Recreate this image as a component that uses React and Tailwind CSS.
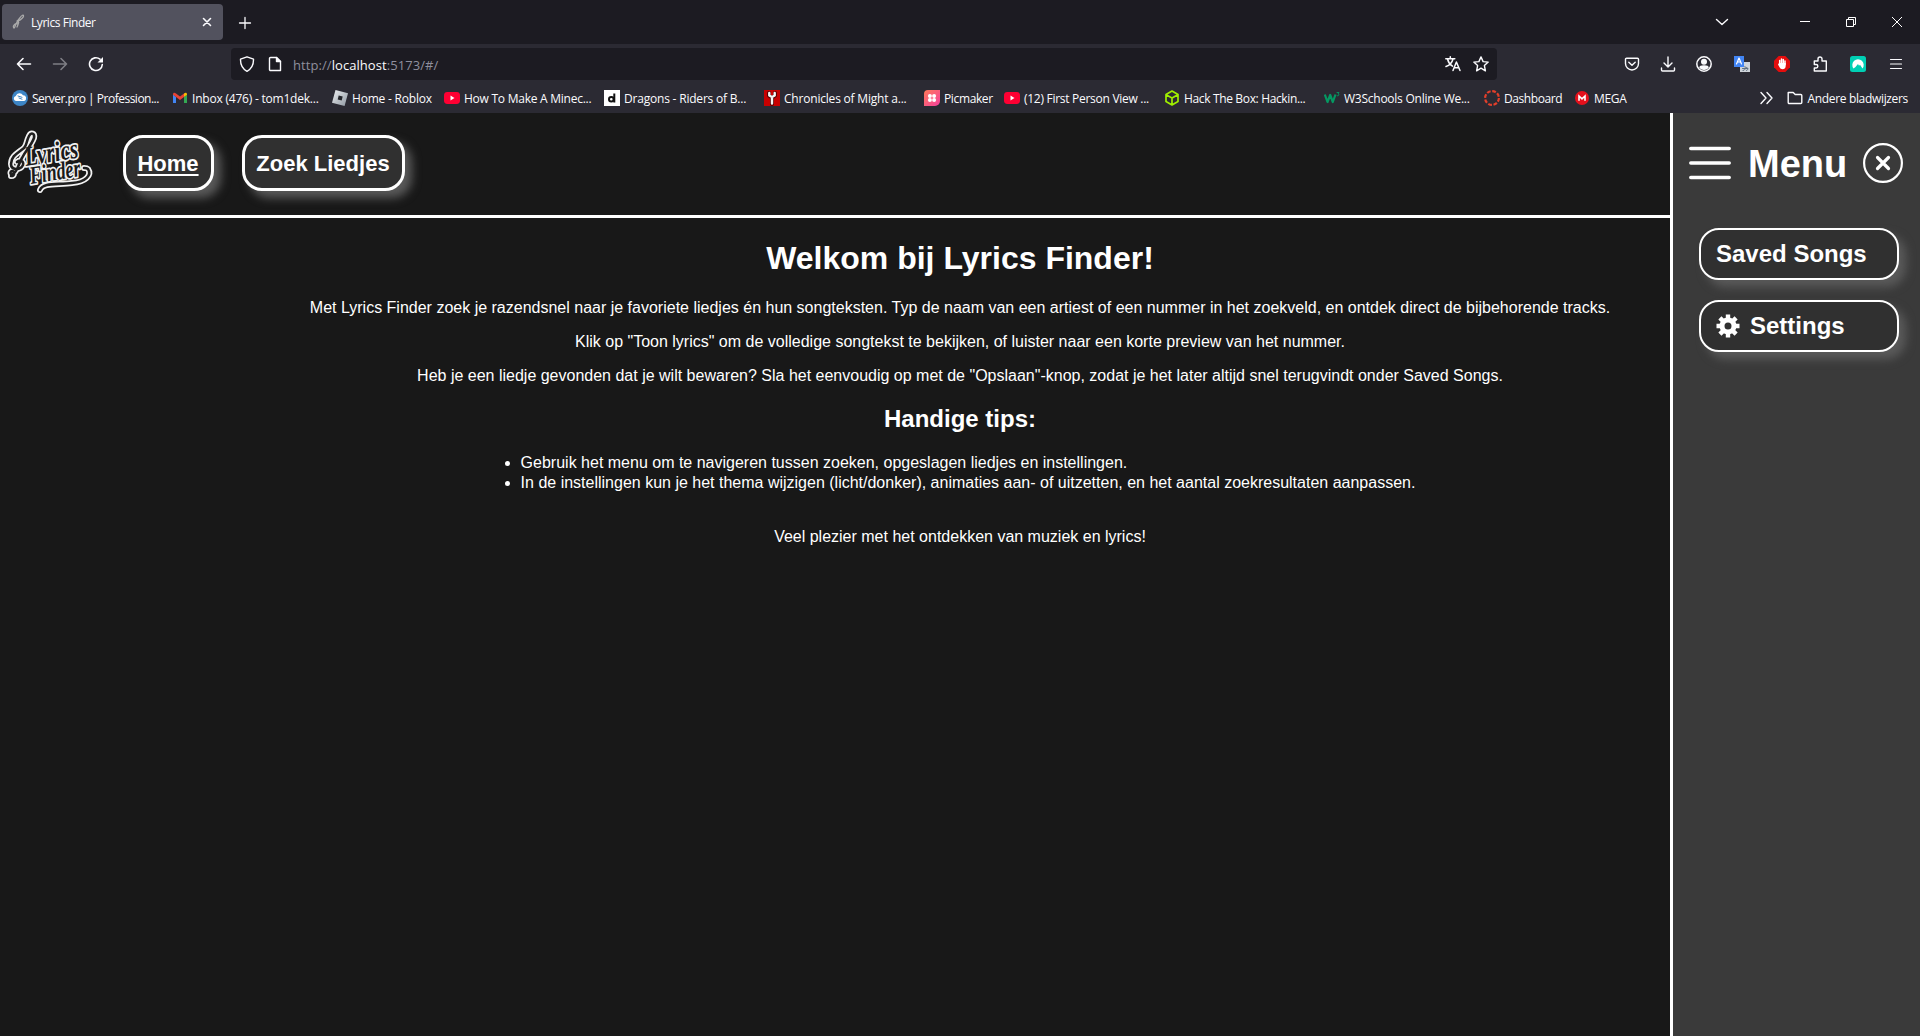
import React from "react";

const stroke = { fill: "none", stroke: "#fbfbfe", strokeWidth: 1.4, strokeLinecap: "round", strokeLinejoin: "round" };

function Ic({ children, className = "" }) {
  return (
    <svg width="16" height="16" viewBox="0 0 16 16" className={"shrink-0 " + className} {...stroke}>
      {children}
    </svg>
  );
}

const YouTube = () => (
  <Ic>
    <rect x="0" y="2" width="16" height="12" rx="3.4" fill="#ff0033" stroke="none" />
    <path d="M6.5 5.6v4.8L10.500 8z" fill="#fff" stroke="none" />
  </Ic>
);

const bookmarks = [
  { label: "Server.pro | Profession...", w: "w-[160px]", t: "tracking-[-0.5px]", icon: (
    <Ic><circle cx="8" cy="8" r="8" fill="#3d85c6" stroke="none" /><path d="M4 11a2.600 2.600 0 0 1-.2-5.100A4 4 0 0 1 11 5.200a3 3 0 0 1 1.200 5.800z" fill="#fff" stroke="none" /><path d="M6 6l4 1.300M7 8l3 1.200" stroke="#3d85c6" strokeWidth="1" /></Ic>) },
  { label: "Inbox (476) - tom1dek...", w: "w-[160px]", t: "tracking-[-0.21px]", icon: (
    <Ic><g stroke="none"><path d="M1 4.500v8.500h3V7z" fill="#4285f4" /><path d="M15 4.500v8.500h-3V7z" fill="#34a853" /><path d="M12 7l3-2.300c0-2-1.500-2.300-3-1.200z" fill="#fbbc04" /><path d="M1 4.500C1 2.500 2.600 2.300 4 3.500l4 3 4-3V7l-4 3-4-3-3-2.200z" fill="#ea4335" /></g></Ic>) },
  { label: "Home - Roblox", w: "w-[112px]", t: "tracking-[-0.2px]", icon: (
    <Ic><defs><linearGradient id="rb" x2="1" y2="1"><stop stopColor="#eef0f2" /><stop offset="1" stopColor="#8d96a0" /></linearGradient></defs><path d="M3.500 0 16 3.200 12.600 16 0 12.700z" fill="url(#rb)" stroke="none" /><path d="M6.700 5.500l4 1-1 4-4-1z" fill="#24262b" stroke="none" /></Ic>) },
  { label: "How To Make A Minec...", w: "w-[160px]", t: "tracking-[-0.25px]", icon: <YouTube /> },
  { label: "Dragons - Riders of B...", w: "w-[160px]", t: "tracking-[-0.2px]", icon: (
    <Ic><rect width="16" height="16" fill="#fff" stroke="none" /><circle cx="7.300" cy="9.300" r="2.300" stroke="#111" strokeWidth="2" /><path d="M10.300 3.500v9" stroke="#111" strokeWidth="2" strokeLinecap="butt" /></Ic>) },
  { label: "Chronicles of Might a...", w: "w-[160px]", t: "tracking-[-0.2px]", icon: (
    <Ic><rect width="16" height="16" fill="#c80000" stroke="none" /><path d="M5 3v2.500L8 7.500l3-2V3M8 8v6" stroke="#500" strokeWidth="4" /><path d="M5.300 3v2.500L8 7l2.700-1.500V3M8 8v5.500" stroke="#f4f4f4" strokeWidth="2.400" /></Ic>) },
  { label: "Picmaker", w: "w-[80px]", t: "tracking-[-0.37px]", icon: (
    <Ic><defs><linearGradient id="pm" x2="1" y2="1"><stop stopColor="#ff7a59" /><stop offset="1" stopColor="#f43f9d" /></linearGradient></defs><path d="M4 0h12v11a5 5 0 0 1-5 5H0V4a4 4 0 0 1 4-4z" fill="url(#pm)" stroke="none" /><g fill="#fff" stroke="none"><circle cx="5.900" cy="5.900" r="2" /><circle cx="10.100" cy="5.900" r="2" /><circle cx="5.900" cy="10.100" r="2" /><circle cx="10.100" cy="10.100" r="2" /></g></Ic>) },
  { label: "(12) First Person View ...", w: "w-[160px]", t: "tracking-[-0.28px]", icon: <YouTube /> },
  { label: "Hack The Box: Hackin...", w: "w-[160px]", t: "tracking-[-0.35px]", icon: (
    <Ic><path d="M8 1l6 3.500v7L8 15l-6-3.500v-7zM2.500 5 8 8l5.500-3M8 8v6.500" stroke="#9fef00" strokeWidth="1.700" /></Ic>) },
  { label: "W3Schools Online We...", w: "w-[160px]", t: "tracking-[-0.25px]", icon: (
    <Ic><path d="M.8 4.500 3.500 12 6.200 5l2.600 7L11.500 4.500" stroke="#059862" strokeWidth="2.200" strokeLinecap="butt" /><path d="M13 2.500h2L14 4c1.500 0 1.300 2.300-.8 1.800" stroke="#059862" strokeWidth=".9" /></Ic>) },
  { label: "Dashboard", w: "w-[90px]", t: "tracking-[-0.42px]", icon: (
    <Ic><circle cx="8" cy="8" r="6.900" stroke="#e13f2b" strokeWidth="2.200" strokeLinecap="butt" strokeDasharray="3.820 1.600" /></Ic>) },
  { label: "MEGA", w: "w-[60px]", t: "tracking-[-0.3px]", icon: (
    <Ic><circle cx="8" cy="8" r="7" fill="#e5101c" stroke="none" /><path d="M5 10.700V6l3 2.800L11 6v4.700" stroke="#fff" strokeWidth="1.600" strokeLinecap="butt" strokeLinejoin="miter" /></Ic>) },
];

const clef = "M13 50c-2 2-4-2-1-3 3 0 3 5-1 5M14 49c4-3 4-8 8-15 4-8 9-12 12-20 1-5-3-6-5-2-3 6-2 9-5 12-6 5-13 8-13 16 0 6 9 7 12 1 1-4-3-6-6-3";
const swash = "M40 66c3-8 18-5 32-7 14-1 20-8 16-14-1-1-3-1-4-1";

function Logo() {
  return (
    <svg width="100" height="96" viewBox="0 -11 100 96" className="shrink-0 overflow-visible">
      <g fill="none" stroke="#f2f2f2" strokeWidth="6" strokeLinecap="round" strokeLinejoin="round">
        <path d={clef} />
        <path d={swash} />
      </g>
      <g fontFamily="'Liberation Serif', serif" fontWeight="700" fontStyle="italic" fill="#1a1a1a" stroke="#f2f2f2" strokeWidth="3.600" strokeLinejoin="round" paintOrder="stroke">
        <text transform="translate(26 42) rotate(-9)" fontSize="28" textLength="54" lengthAdjust="spacingAndGlyphs">Lyrics</text>
        <text transform="translate(31 60) rotate(-9)" fontSize="25" textLength="51" lengthAdjust="spacingAndGlyphs">Finder</text>
      </g>
      <g fill="none" stroke="#1f1f1f" strokeWidth="2.600" strokeLinecap="round" strokeLinejoin="round">
        <path d={clef} />
        <path d={swash} />
      </g>
    </svg>
  );
}

function Gear() {
  return (
    <svg width="24" height="24" viewBox="0 0 24 24" className="shrink-0 mr-[10px]" fill="none" stroke="#fff">
      <circle cx="12" cy="12" r="6" strokeWidth="5" />
      <path d="M12 .5v5M12 18.500v5M.5 12h5M18.500 12h5M3.900 3.900l3.500 3.500M16.600 16.600l3.500 3.500M3.900 20.100l3.500-3.500M16.600 7.400l3.500-3.500" strokeWidth="4.400" />
    </svg>
  );
}

function Browser() {
  return (
    <div className="h-[113px] bg-[#2b2a33] text-[#fbfbfe] font-['Open_Sans',sans-serif] text-[12px] whitespace-nowrap">
      <div className="h-11 bg-[#1c1b22] flex items-center pl-[2px]">
        <div className="w-[221px] h-9 rounded bg-[#52525e] flex items-center pl-[9px] pr-[10px] text-[12px] tracking-[-0.45px]">
          <Ic className="mr-[4px]"><path d="M3 14c-2-2 1-5 4-4 2-3-1-3-2 0-1 2-1 3-2 4zM6 7c2-1 3-5 6-6 2 1-2 5-5 6 1 1 0 4-1 6" stroke="#aaa" strokeWidth="1.300" /></Ic>
          <span className="grow pt-[2px]">Lyrics Finder</span>
          <Ic className="-mr-[2px]"><path d="M4.500 4.500l7 7M11.500 4.500l-7 7" strokeWidth="1.600" /></Ic>
        </div>
        <Ic className="ml-[14px] mt-[2px]"><path d="M8 2.500v11M2.500 8h11" strokeWidth="1.300" /></Ic>
        <div className="ml-auto flex items-center">
          <Ic className="mr-[70px]"><path d="M2.500 5.500 8 10.500l5.500-5" /></Ic>
          <svg width="10" height="10" viewBox="0 0 10 10" className="mr-9" stroke="#fff" fill="none"><path d="M0 4.500h10" /></svg>
          <svg width="10" height="10" viewBox="0 0 10 10" className="mr-9" stroke="#fff" fill="none"><path d="M.5 2.500h7v7h-7zM2.500 2.500v-2h7v7h-2" /></svg>
          <svg width="10" height="10" viewBox="0 0 10 10" className="mr-[18px]" stroke="#fff" fill="none"><path d="M0 0l10 10M10 0 0 10" /></svg>
        </div>
      </div>
      <div className="h-10 flex items-center pl-4">
        <Ic><path d="M1.500 8h13M7 2.500 1.500 8 7 13.500" strokeWidth="1.600" /></Ic>
        <Ic className="ml-5 opacity-40"><path d="M1.500 8h13M9 2.500 14.500 8 9 13.500" strokeWidth="1.600" /></Ic>
        <Ic className="ml-5"><path d="M14.300 8.500A6.400 6.400 0 1 1 12 3.200" strokeWidth="1.600" /><path d="M15 1v5.500H9.500z" fill="#fbfbfe" stroke="none" /></Ic>
        <div className="ml-[127px] w-[1266px] h-8 rounded bg-[#1c1b22] flex items-center px-2">
          <Ic><path d="M8 .8 14.500 3.200C14.700 9.500 12.500 13 8 15.300 3.500 13 1.300 9.500 1.500 3.200z" /></Ic>
          <Ic className="ml-3"><path d="M3.500 1.500h6l4 4v9h-10a1 1 0 0 1-1-1v-11a1 1 0 0 1 1-1z" /><path d="M9.500 1.500v4h4z" fill="#fbfbfe" /></Ic>
          <span className="ml-[10px] pt-[3px] grow text-[13px] tracking-[0.07px] text-[#8f8f9d]">http://<span className="text-[#fbfbfe]">localhost</span>:5173/#/</span>
          <Ic className="mr-3"><path d="M.8 2.800h9M5.300.800v2M2.500 3c1 4 3 6 5 7.200M8 3C7 7 4 9.500 1 10.500M8 14.500l3.400-8.500 3.600 8.500M9.300 11.800h4.500" strokeWidth="1.500" /></Ic>
          <Ic><path d="M8 .9l2.100 4.700 5.100.5-3.800 3.500 1 5.200L8 12.200l-4.400 2.600 1-5.200L.8 6.100l5.100-.5z" /></Ic>
        </div>
        <div className="ml-auto mr-4 flex items-center">
          <Ic className="mr-[20px]"><path d="M2.500 2.200h11a1 1 0 0 1 1 1V7.500a6.500 6.500 0 0 1-13 0V3.200a1 1 0 0 1 1-1zM4.800 6.200 8 9.300l3.200-3.100" /></Ic>
          <Ic className="mr-[20px]"><path d="M8 1v9.500M4 7l4 4 4-4M1.500 12v2a1 1 0 0 0 1 1h11a1 1 0 0 0 1-1v-2" /></Ic>
          <Ic className="mr-[22px]"><circle cx="8" cy="8" r="7.200" strokeWidth="1.500" /><circle cx="8" cy="5.800" r="2.300" fill="#fbfbfe" /><path d="M4 11.500c0-2 8-2 8 0-2 2.300-6 2.300-8 0z" fill="#fbfbfe" /></Ic>
          <Ic className="mr-[24px]"><rect width="10" height="11" fill="#4285f4" stroke="none" /><rect x="6" y="6" width="10" height="10" fill="#cfd4da" stroke="none" /><path d="M0 0h10v11H0z" fill="#4285f4" stroke="none" /><path d="M2.500 8 5 2l2.500 6M3.500 6h3" stroke="#fff" strokeWidth="1.200" /><path d="M8.500 12.500h5M11 10.500c1 2 0 4-2 4M12.500 11.500c2 0 2 2.500 0 3" stroke="#607080" strokeWidth="1" /></Ic>
          <Ic className="mr-[22px]"><path d="M4.700 0h6.600L16 4.700v6.600L11.300 16H4.700L0 11.300V4.700z" fill="#e40d0d" stroke="none" /><path d="M5.700 8V4.500M7.500 7V3M9.300 7V3.500M11 8.500V5" stroke="#fff" strokeWidth="1.500" /><path d="M5 7h6.700v3c0 4-5 4-6 1.500L4 8.500z" fill="#fff" stroke="none" /></Ic>
          <Ic className="mr-[22px]"><path d="M2.300 15h12V5H10V3a2 2 0 0 0-4 0v2H2.300v3.500h1.800a1.700 1.700 0 0 1 0 3.500H2.300z" /></Ic>
          <Ic className="mr-[22px]"><rect width="16" height="16" rx="2.500" fill="#00cfb4" stroke="none" /><path d="M3.500 12.500a5.700 5.700 0 1 1 9 0L10 8.800l-1 1L8 8 5.500 11z" fill="#fff" stroke="none" /></Ic>
          <Ic><path d="M2.500 3.500h11M2.500 8h11M2.500 12.500h11" strokeWidth="1.200" /></Ic>
        </div>
      </div>
      <div className="h-7 flex items-center pl-3">
        {bookmarks.map((b) => (
          <div key={b.label} className={"flex items-center gap-1 shrink-0 " + b.w}>
            {b.icon}
            <span className={"pt-[2px] " + b.t}>{b.label}</span>
          </div>
        ))}
        <div className="ml-auto mr-3 flex items-center">
          <Ic className="mr-[13px]"><path d="M3 2.500 8 8l-5 5.500M9 2.500 14 8l-5 5.500" /></Ic>
          <Ic className="mr-1"><path d="M1.200 2.500h5l2 2h5.600a1 1 0 0 1 1 1v7a1 1 0 0 1-1 1H2.200a1 1 0 0 1-1-1z" /></Ic>
          <span className="pt-[2px] tracking-[-0.33px]">Andere bladwijzers</span>
        </div>
      </div>
    </div>
  );
}

function NavButton({ children, className = "" }) {
  return (
    <button className={"h-14 pl-[11px] pr-3 rounded-[20px] border-[3px] border-white bg-[#303030] text-[22px] font-bold whitespace-nowrap shadow-[7px_7px_10px_#5a5a5a] " + className}>
      {children}
    </button>
  );
}

const sideLink = "w-[200px] h-[52px] rounded-[20px] border-2 border-white bg-[#303030] shadow-[7px_7px_10px_#5a5a5a] flex items-center pl-[15px]";

export default function App() {
  return (
    <div className="w-[1920px] h-[1036px] overflow-hidden bg-[#181818]">
      <Browser />
      <div className="grid h-[923px] font-['Liberation_Sans',Arial,sans-serif] text-white">
        <div className="col-start-1 row-start-1">
          <header className="h-[105px] border-b-[3px] border-white flex items-start">
            <Logo />
            <NavButton className="w-[91px] mt-[22px] ml-[23px] underline underline-offset-[3px]">Home</NavButton>
            <NavButton className="w-[163px] mt-[22px] ml-7">Zoek Liedjes</NavButton>
          </header>
          <main className="pt-[22px] flex flex-col items-center text-[16px] leading-[18px]">
            <h1 className="text-[32px] leading-[37px] font-bold">Welkom bij Lyrics Finder!</h1>
            <p className="mt-[22px]">Met Lyrics Finder zoek je razendsnel naar je favoriete liedjes én hun songteksten. Typ de naam van een artiest of een nummer in het zoekveld, en ontdek direct de bijbehorende tracks.</p>
            <p className="mt-4">Klik op "Toon lyrics" om de volledige songtekst te bekijken, of luister naar een korte preview van het nummer.</p>
            <p className="mt-4">Heb je een liedje gevonden dat je wilt bewaren? Sla het eenvoudig op met de "Opslaan"-knop, zodat je het later altijd snel terugvindt onder Saved Songs.</p>
            <h2 className="mt-5 text-[24px] leading-[27px] font-bold">Handige tips:</h2>
            <ul className="mt-[21px] ml-4 list-disc leading-5">
              <li>Gebruik het menu om te navigeren tussen zoeken, opgeslagen liedjes en instellingen.</li>
              <li>In de instellingen kun je het thema wijzigen (licht/donker), animaties aan- of uitzetten, en het aantal zoekresultaten aanpassen.</li>
            </ul>
            <p className="mt-[35px]">Veel plezier met het ontdekken van muziek en lyrics!</p>
          </main>
        </div>
        <aside className="col-start-1 row-start-1 justify-self-end w-[250px] border-l-[3px] border-white bg-[#3a3a3a]">
          <div className="mt-[30px] ml-4 h-10 flex items-center">
            <svg width="42" height="34" viewBox="0 0 42 34" className="shrink-0" stroke="#fff" strokeWidth="3.500" strokeLinecap="round"><path d="M1.800 2.500h38.400M1.800 17h38.400M1.800 31.500h38.400" /></svg>
            <span className="ml-[17px] pt-[2px] text-[38px] font-bold leading-10">Menu</span>
            <svg width="40" height="40" viewBox="0 0 40 40" className="ml-4 shrink-0" fill="none" stroke="#fff" strokeLinecap="round"><circle cx="20" cy="20" r="18.900" strokeWidth="2.200" /><path d="M14.500 14.500l11 11M25.500 14.500l-11 11" strokeWidth="3.200" /></svg>
          </div>
          <nav className="mt-[45px] ml-[26px] flex flex-col gap-5 text-[24px] font-bold">
            <a className={sideLink}>Saved Songs</a>
            <a className={sideLink}><Gear />Settings</a>
          </nav>
        </aside>
      </div>
    </div>
  );
}
